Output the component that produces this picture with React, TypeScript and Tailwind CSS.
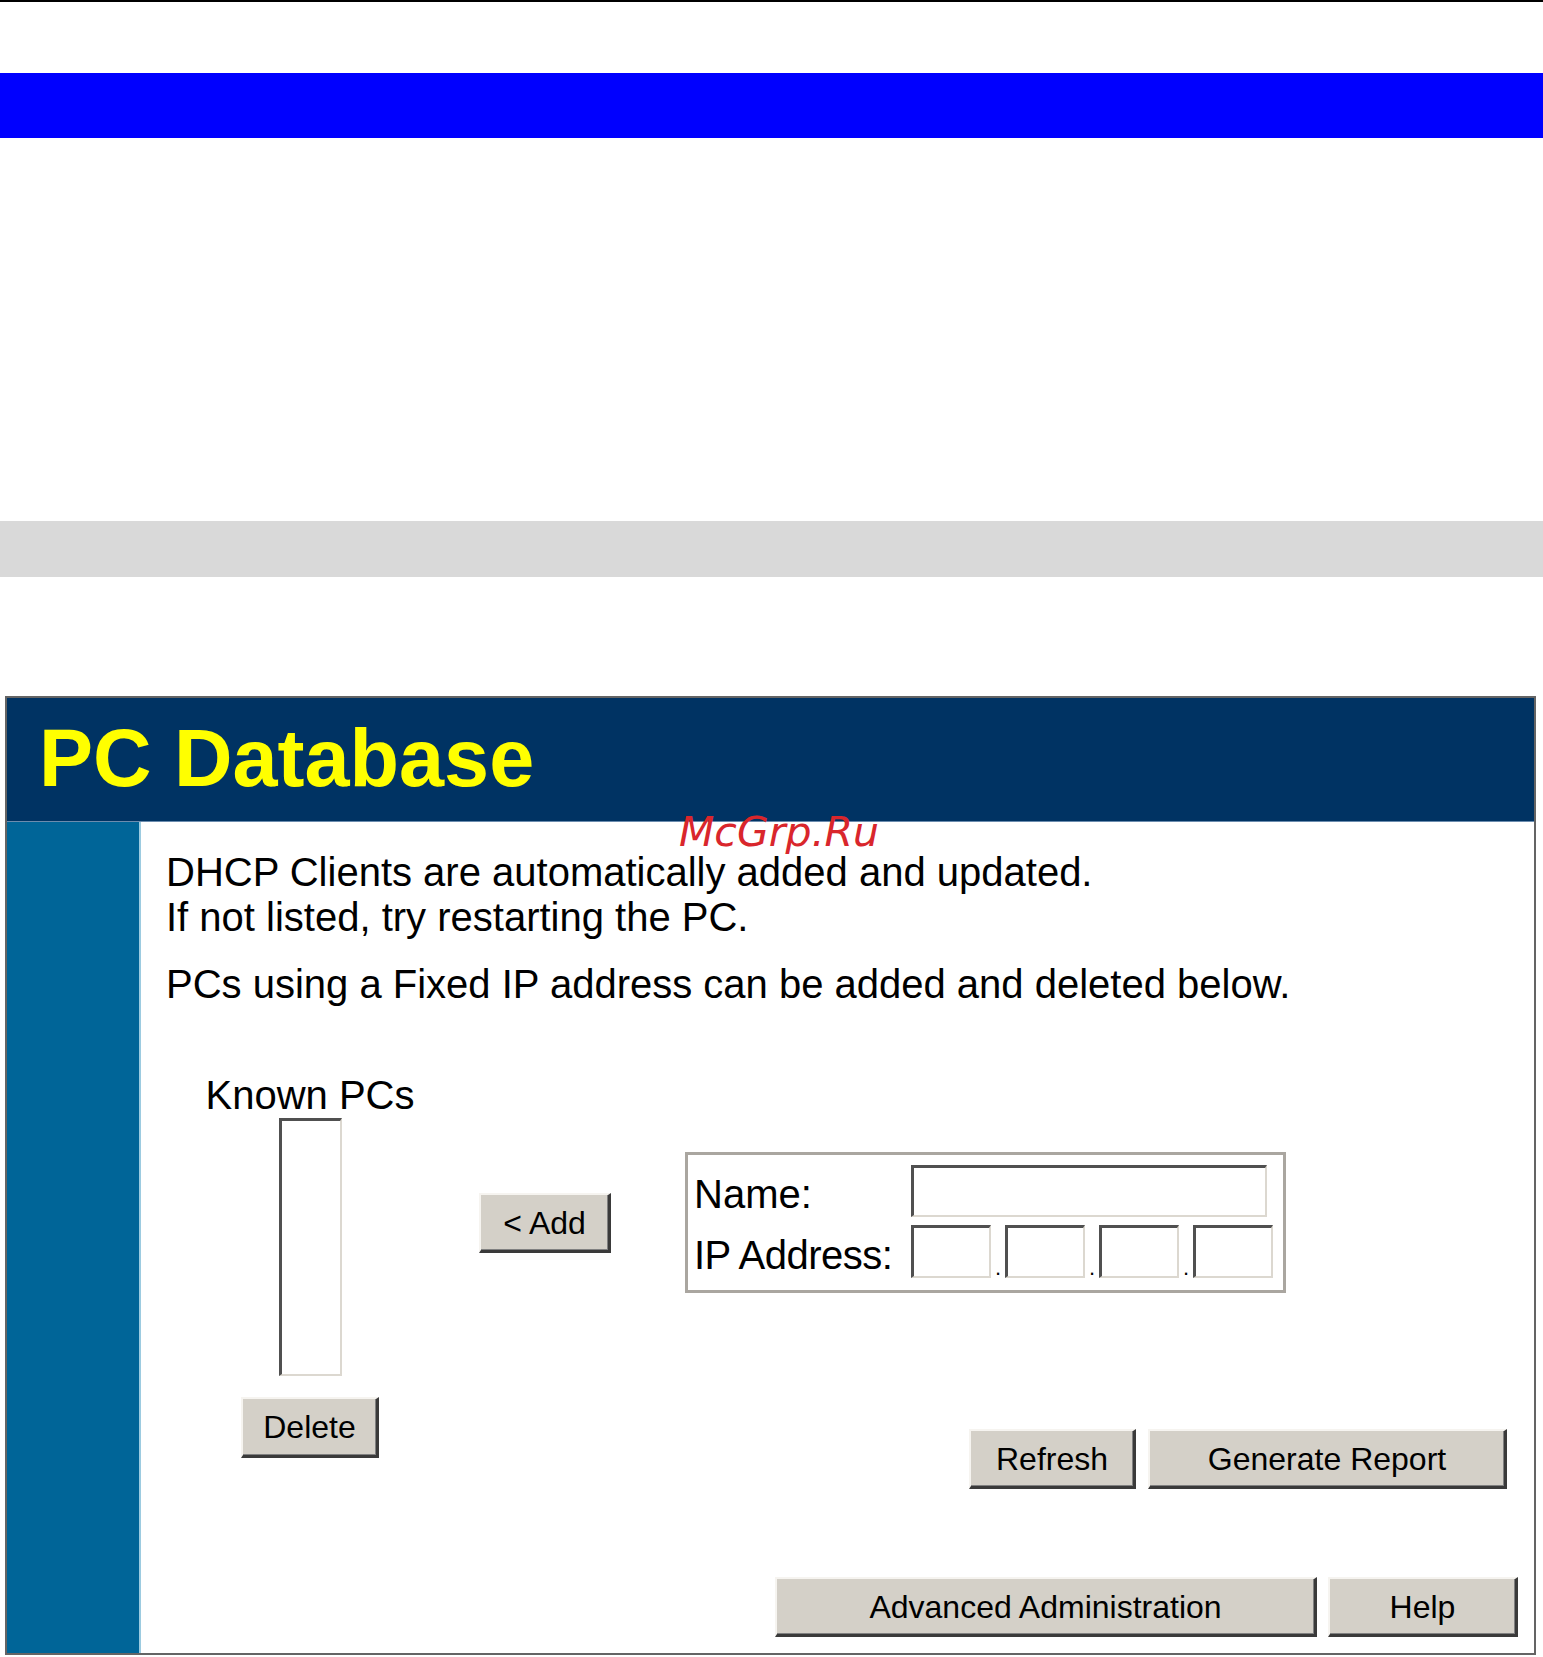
import React from 'react';

const sans = "font-['Liberation_Sans',Arial,sans-serif]";

function WinButton({ label, className }: { label: string; className: string }) {
  return (
    <button
      type="button"
      className={`${className} bg-[#d4d0c8] text-black text-[32px] leading-none ${sans} border-t-2 border-l-2 border-r-[3px] border-b-[3px] border-t-[#f6f4f0] border-l-[#f6f4f0] border-r-[#3a3a3a] border-b-[#3a3a3a] shadow-[inset_-1px_-1px_0_#808080] flex items-center justify-center`}
    >
      {label}
    </button>
  );
}

const sunken =
  'bg-white border-t-[3px] border-l-[3px] border-r-2 border-b-2 border-t-[#505050] border-l-[#505050] border-r-[#dcd8d0] border-b-[#dcd8d0]';

export default function App() {
  return (
    <div className={`w-[1543px] min-h-[1657px] bg-white ${sans}`}>
      {/* top rule + coloured bars */}
      <div className="h-[2px] bg-black" />
      <div className="mt-[71px] h-[65px] bg-[#0000ff]" />
      <div className="mt-[383px] h-[56px] bg-[#d9d9d9]" />

      {/* PC Database panel */}
      <div className="relative mt-[119px] ml-[5px] w-[1531px] border-2 border-[#646464] flex flex-col">
        <div className="h-[124px] bg-[#003363] border-b border-[#6b8cae] pl-[32px] pt-[20px]">
          <h1 className="text-[81px] leading-none font-bold text-[#ffff00]">PC Database</h1>
        </div>

        <div className="flex">
          <div className="w-[134px] shrink-0 bg-[#006598] border-r-2 border-[#9ccbe0]" />

          <div className="flex-1 bg-white pt-[28px] pl-[25px] pb-[16px] text-black">
            <p className="text-[40px] leading-[45px]">DHCP Clients are automatically added and updated.</p>
            <p className="text-[40px] leading-[45px]">If not listed, try restarting the PC.</p>
            <p className="mt-[22px] text-[40px] leading-[45px]">
              PCs using a Fixed IP address can be added and deleted below.
            </p>

            <div className="mt-[66px] flex items-start">
              {/* Known PCs column */}
              <div className="w-[288px] shrink-0 flex flex-col items-center">
                <span className="text-[40px] leading-[45px]">Known PCs</span>
                <div className={`w-[63px] h-[258px] ${sunken}`} />
                <WinButton label="Delete" className="mt-[21px] w-[138px] h-[61px]" />
              </div>

              <div className="flex-1 flex flex-col">
                <div className="flex items-start">
                  <WinButton label="< Add" className="ml-[25px] mt-[120px] w-[132px] h-[60px]" />

                  <div className="ml-[74px] mt-[79px] w-[601px] border-[3px] border-[#aaa6a0] pl-[6px] pt-[10px] pb-[12px]">
                    <div className="flex items-end">
                      <span className="w-[217px] text-[40px] leading-[45px]">Name:</span>
                      <div className={`w-[356px] h-[52px] ${sunken}`} />
                    </div>
                    <div className="mt-[8px] flex items-end">
                      <span className="w-[217px] text-[40px] leading-[45px] tracking-[-0.5px]">IP Address:</span>
                      <div className={`w-[80px] h-[53px] ${sunken}`} />
                      <span className="w-[14px] text-center text-[22px] leading-[20px]">.</span>
                      <div className={`w-[80px] h-[53px] ${sunken}`} />
                      <span className="w-[14px] text-center text-[22px] leading-[20px]">.</span>
                      <div className={`w-[80px] h-[53px] ${sunken}`} />
                      <span className="w-[14px] text-center text-[22px] leading-[20px]">.</span>
                      <div className={`w-[80px] h-[53px] ${sunken}`} />
                    </div>
                  </div>
                </div>

                <div className="mt-[136px] pr-[27px] flex justify-end gap-[12px]">
                  <WinButton label="Refresh" className="w-[167px] h-[60px]" />
                  <WinButton label="Generate Report" className="w-[359px] h-[60px]" />
                </div>
              </div>
            </div>

            <div className="mt-[88px] pr-[16px] flex justify-end gap-[11px]">
              <WinButton label="Advanced Administration" className="w-[542px] h-[60px]" />
              <WinButton label="Help" className="w-[190px] h-[60px]" />
            </div>
          </div>
        </div>

        {/* site watermark lying over the panel */}
        <span className="absolute left-[672px] top-[116px] text-[41px] leading-[36px] italic text-[#d9262c] font-['DejaVu_Sans',sans-serif]">
          McGrp.Ru
        </span>
      </div>
    </div>
  );
}
